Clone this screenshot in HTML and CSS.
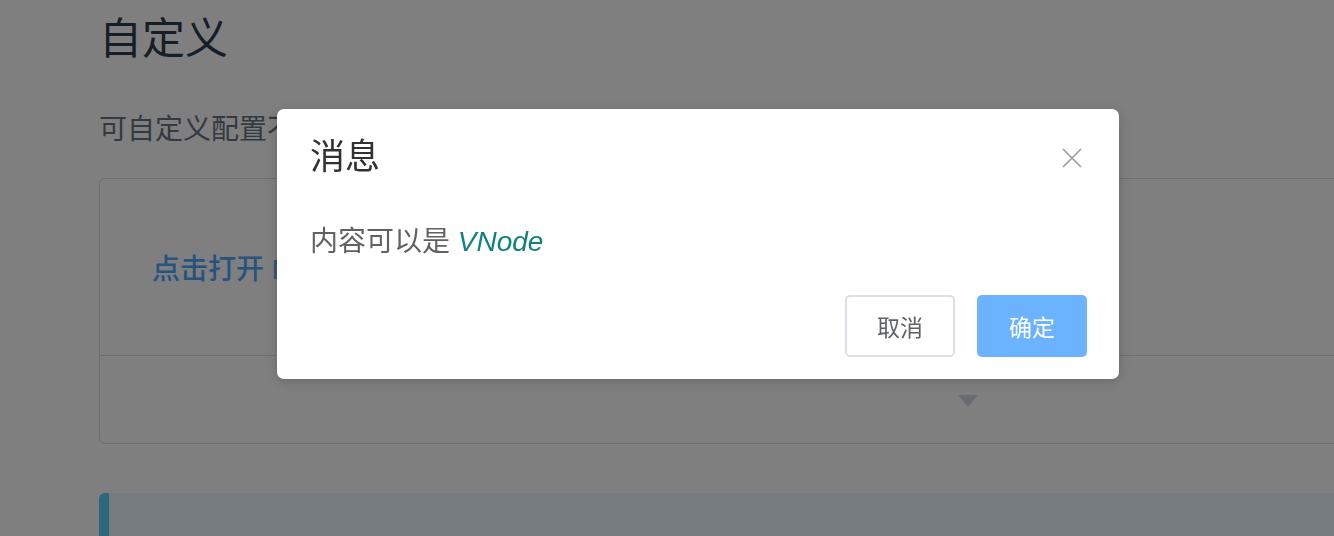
FILE: index.html
```html
<!DOCTYPE html>
<html lang="zh-CN">
<head>
  <meta charset="UTF-8">
  <meta name="viewport" content="width=device-width, initial-scale=1.0">
  <title>自定义</title>
  <link rel="stylesheet" href="styles.css">
</head>
<body>
  <div class="page">
    <h2 class="page-title">自定义</h2>
    <p class="page-desc">可自定义配置不同的内容</p>

    <div class="demo-card">
      <div class="demo-body">
        <a class="demo-link" href="#">点击打开 Modal</a>
      </div>
      <div class="demo-foot">
        <span class="demo-arrow"></span>
      </div>
    </div>

    <div class="tip-block"></div>
  </div>

  <div class="mask"></div>

  <div class="modal-wrap">
    <div class="modal">
      <div class="modal-header">
        <span class="modal-title">消息</span>
        <button class="modal-close" aria-label="关闭">
          <svg width="20" height="20" viewBox="0 0 20 20">
            <path d="M1 1 L19 19 M19 1 L1 19" stroke="#9a9a9a" stroke-width="1.6" fill="none"/>
          </svg>
        </button>
      </div>
      <div class="modal-body">
        内容可以是 <i class="vnode">VNode</i>
      </div>
      <div class="modal-footer">
        <button class="btn btn-default">取消</button>
        <button class="btn btn-primary">确定</button>
      </div>
    </div>
  </div>
</body>
</html>
```

FILE: styles.css
```css
html, body {
  overflow: hidden;
}

body {
  margin: 0;
  font-family: "Liberation Sans", "Noto Sans CJK SC", sans-serif;
  background: #fff;
  color: #2c3e50;
}

.page {
  padding-left: 99px;
  width: 1738px;
}

.page-title {
  margin: 15px 0 0;
  font-size: 43px;
  line-height: 48px;
  font-weight: 400;
  color: #2c3e50;
}

.page-desc {
  margin: 45px 0 0;
  font-size: 28px;
  line-height: 44px;
  color: #6a7380;
}

.demo-card {
  margin-top: 26px;
  border: 1px solid #dcdce0;
  border-radius: 6px;
}

.demo-body {
  height: 176px;
  padding: 0 52px;
  display: flex;
  align-items: center;
  border-bottom: 1px solid #dcdce0;
}

.demo-link {
  font-size: 28px;
  font-weight: 500;
  color: #4ea6ff;
  text-decoration: none;
}

.demo-foot {
  height: 87px;
  display: flex;
  justify-content: center;
  align-items: center;
}

.demo-arrow {
  width: 0;
  height: 0;
  border-left: 10px solid transparent;
  border-right: 10px solid transparent;
  border-top: 12px solid #d2d8e2;
  margin-top: 3px;
}

.tip-block {
  margin-top: 49px;
  height: 120px;
  background: #ecf6ff;
  border-left: 10px solid #58ccff;
  border-radius: 6px;
}

.mask {
  position: fixed;
  inset: 0;
  background: rgba(0, 0, 0, 0.5);
}

.modal-wrap {
  position: fixed;
  inset: 0;
  padding: 109px 0 0 277px;
}

.modal {
  width: 842px;
  box-sizing: border-box;
  padding: 23px 32px 22px 33px;
  background: #fff;
  border-radius: 7px;
  box-shadow: 0 2px 12px rgba(0, 0, 0, 0.18);
}

.modal-header {
  display: flex;
  justify-content: space-between;
  align-items: center;
}

.modal-title {
  font-size: 35px;
  line-height: 49px;
  color: #303133;
}

.modal-close {
  border: none;
  background: none;
  padding: 0;
  margin-right: 5px;
  margin-top: 2px;
  display: flex;
}

.modal-body {
  margin-top: 40px;
  font-size: 28px;
  line-height: 42px;
  color: #5f6166;
}

.vnode {
  color: #12827d;
}

.modal-footer {
  margin-top: 32px;
  display: flex;
  justify-content: flex-end;
  gap: 22px;
}

.btn {
  width: 110px;
  height: 62px;
  font-family: inherit;
  font-size: 23px;
  border-radius: 5px;
  cursor: pointer;
}

.btn-default {
  background: #fff;
  border: 2px solid #dcdfe6;
  color: #606266;
}

.btn-primary {
  background: #6cb3ff;
  border: none;
  color: #fff;
}
```
